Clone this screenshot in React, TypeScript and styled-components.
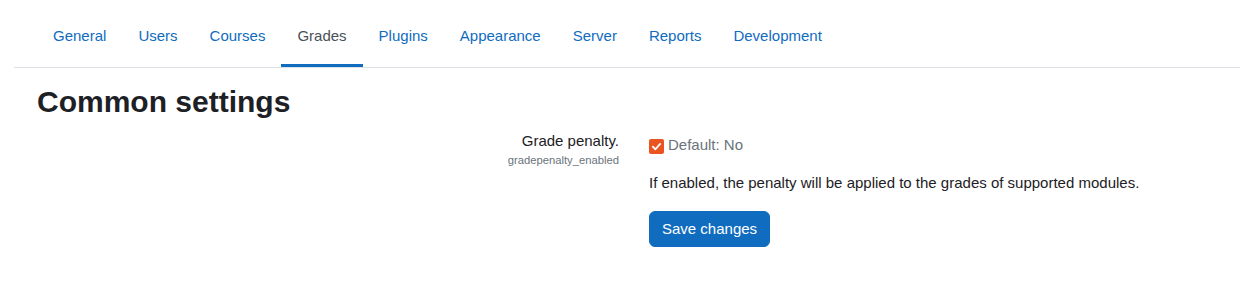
import React from "react";
import styled, { createGlobalStyle } from "styled-components";

const Global = createGlobalStyle`
  html, body { margin: 0; padding: 0; background: #fff; }
  body {
    font-family: "Liberation Sans", Arial, sans-serif;
    font-size: 15px;
    line-height: 1.5;
    color: #1d2125;
  }
  * { box-sizing: border-box; }
`;

const Page = styled.div`
  padding-left: 14px;
  width: 1240px;
`;

const Nav = styled.nav`
  border-bottom: 1px solid #dee2e6;
`;

const TabList = styled.ul`
  display: flex;
  list-style: none;
  margin: 0;
  padding: 0 0 0 23px;
`;

const Tab = styled.li<{ $active?: boolean }>`
  padding: 25px 16px 17px;
  line-height: 22px;
  border-bottom: 3px solid ${(p) => (p.$active ? "#0f6cbf" : "transparent")};
  color: ${(p) => (p.$active ? "#495057" : "#0f6cbf")};
  cursor: pointer;
  white-space: nowrap;
`;

const Content = styled.main`
  padding-left: 23px;
`;

const Heading = styled.h2`
  margin: 16px 0 0;
  font-size: 30px;
  line-height: 36px;
  font-weight: 700;
  color: #1d2125;
`;

const FormRow = styled.div`
  display: grid;
  grid-template-columns: 582px 1fr;
  column-gap: 30px;
  margin-top: 9.5px;
`;

const LabelCol = styled.div`
  display: flex;
  flex-direction: column;
  align-items: flex-end;
  text-align: right;
`;

const Label = styled.label`
  line-height: 22.5px;
  color: #1d2125;
`;

const SettingName = styled.span`
  font-size: 11.25px;
  line-height: 16.875px;
  color: #6a737b;
`;

const ControlCol = styled.div`
  display: flex;
  flex-direction: column;
  align-items: flex-start;
  padding-top: 4px;
`;

const CheckRow = styled.div`
  display: flex;
  align-items: center;
  gap: 4px;
  line-height: 22.5px;
  color: #6a737b;
`;

const Box = styled.span`
  width: 15px;
  height: 15px;
  border-radius: 2px;
  background: #e95420;
  display: inline-flex;
  align-items: center;
  justify-content: center;
  margin-top: 3px;
`;

const Description = styled.p`
  margin: 16px 0 0;
  line-height: 22.5px;
  color: #1d2125;
`;

const Button = styled.button`
  margin-top: 16px;
  font-family: inherit;
  font-size: 15px;
  line-height: 22.5px;
  padding: 6px 12px;
  border: 1px solid #0f6cbf;
  border-radius: 6px;
  background: #0f6cbf;
  color: #fff;
  cursor: pointer;
`;

const tabs = ["General", "Users", "Courses", "Grades", "Plugins", "Appearance", "Server", "Reports", "Development"];

export default function App() {
  return (
    <Page>
      <Global />
      <Nav>
        <TabList>
          {tabs.map((t) => (
            <Tab key={t} $active={t === "Grades"}>
              {t}
            </Tab>
          ))}
        </TabList>
      </Nav>
      <Content>
        <Heading>Common settings</Heading>
        <FormRow>
          <LabelCol>
            <Label>Grade penalty.</Label>
            <SettingName>gradepenalty_enabled</SettingName>
          </LabelCol>
          <ControlCol>
            <CheckRow>
              <Box>
                <svg width="11" height="11" viewBox="0 0 12 12">
                  <path d="M2 6.2 L4.8 9 L10 3.2" fill="none" stroke="#fff" strokeWidth="2" strokeLinecap="round" strokeLinejoin="round" />
                </svg>
              </Box>
              <span>Default: No</span>
            </CheckRow>
            <Description>If enabled, the penalty will be applied to the grades of supported modules.</Description>
            <Button>Save changes</Button>
          </ControlCol>
        </FormRow>
      </Content>
    </Page>
  );
}
